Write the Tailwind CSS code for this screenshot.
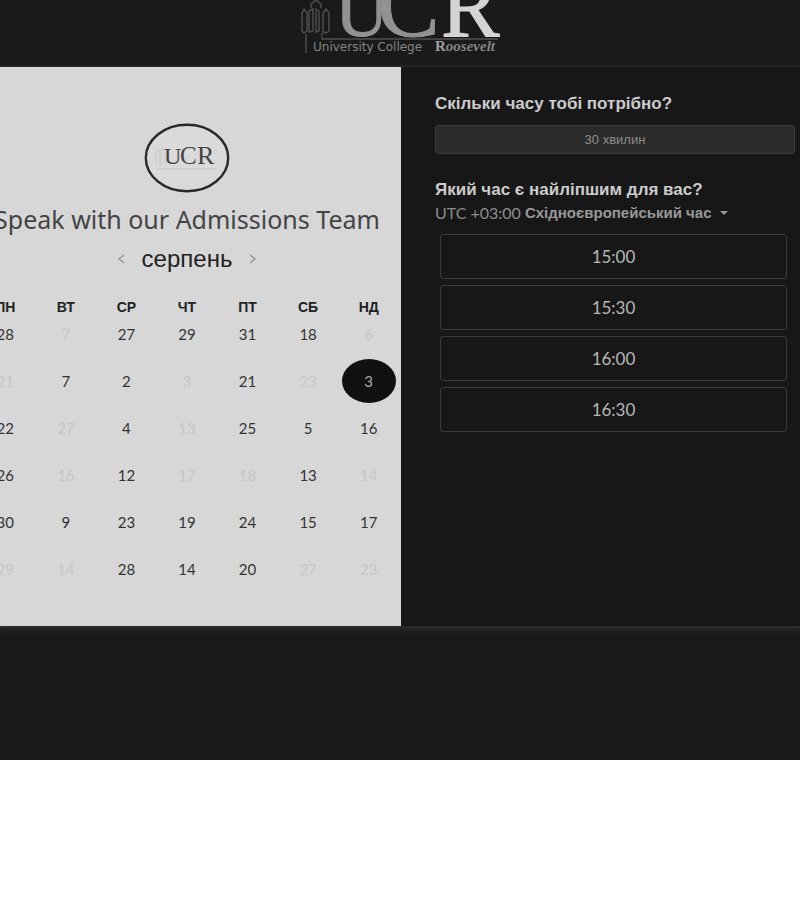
<!DOCTYPE html>
<html lang="uk">
<head>
<meta charset="utf-8">
<meta name="viewport" content="width=device-width, initial-scale=1">
<title>University College Roosevelt</title>
<script src="https://cdn.jsdelivr.net/npm/@tailwindcss/browser@4"></script>
</head>
<body class="bg-white font-['Lato','Liberation_Sans',sans-serif]">
<div class="overflow-hidden bg-[#1a1a1a] pb-[132px]">
  <header class="flex justify-center border-b-2 border-[#262626]">
    <svg class="block h-[65px] w-[208px]" viewBox="0 0 208 65" role="img" aria-label="University College Roosevelt">
      <g fill="none" stroke="#505050" stroke-width="1.4">
        <path d="M10 53V34M8 33l-2-2V13l2-4 3 4v18l-3 2M13 32V11l4-2v22zM20 32V9l3 2v20zM15 8V4l5-4 5 4v4M27 32V13l3-4 3 4v18l-3 2zM26 33v6h176"/>
      </g>
      <g font-family="Liberation Serif, serif">
        <text x="39" y="36" font-size="74" fill="#929292" stroke="#929292">U</text>
        <text x="81" y="36" font-size="94" fill="#929292" stroke="#929292">C</text>
        <text x="145" y="36" font-size="88" fill="#d4d4d4" stroke="#d4d4d4">R</text>
        <text x="139" y="51" font-size="15" font-weight="700" fill="#a0a0a0">R<tspan font-style="italic" fill="#858585">oosevelt</tspan></text>
      </g>
      <text x="17" y="51" font-size="12" font-family="DejaVu Sans, sans-serif" fill="#858585">University College</text>
    </svg>
  </header>

  <main class="grid grid-cols-[401fr_399fr] border-b-2 border-[#2b2b2b] bg-[#171717] shadow-[0_3px_6px_#262626]">
    <section class="overflow-hidden bg-[#d7d7d7] pb-5 text-[#333]">
      <div class="-ml-[25px] pr-[2px]">
        <div class="flex justify-center pt-[56px]">
          <svg class="block h-[70px] w-[86px]" viewBox="0 0 86 70" role="img" aria-label="UCR">
            <ellipse cx="43" cy="35" rx="41.2" ry="33.2" fill="#dadada" stroke="#292929" stroke-width="2.4"/>
            <path d="M12 42V30l2-3 2 3v12M17 42V28l2-3 2 3v14M12 46h61" fill="none" stroke="#c8c8c8"/>
            <g font-family="Liberation Serif, serif" fill="#444">
              <text x="20" y="41" font-size="24">U</text><text x="36" y="41" font-size="25">C</text><text x="53" y="41" font-size="26">R</text>
            </g>
          </svg>
        </div>
        <h1 class="mt-[10px] flex justify-center font-['Noto_Sans',sans-serif] text-[25px] leading-8 whitespace-nowrap text-[#444]">Speak with our Admissions Team</h1>
        <div class="mt-2 flex items-center justify-center gap-3">
          <button type="button" aria-label="Попередній місяць" class="p-1"><svg class="h-2.5 w-2.5" viewBox="0 0 10 10" fill="none" stroke="#999" stroke-width="1.6"><path d="M8 1L3 5l5 4"/></svg></button>
          <h2 class="font-['Liberation_Sans',sans-serif] text-[24px] leading-8 text-[#222]">серпень</h2>
          <button type="button" aria-label="Наступний місяць" class="p-1"><svg class="h-2.5 w-2.5" viewBox="0 0 10 10" fill="none" stroke="#999" stroke-width="1.6"><path d="M2 1l5 4-5 4"/></svg></button>
        </div>
        <table class="mt-[22px] w-full table-fixed text-center align-top text-[15px] leading-5">
          <thead class="font-['Liberation_Sans',sans-serif] text-[14px] text-[#222]">
            <tr class="h-[27px] align-top"><th>ПН</th><th>ВТ</th><th>СР</th><th>ЧТ</th><th>ПТ</th><th>СБ</th><th>НД</th></tr>
          </thead>
          <tbody>
            <tr class="h-[47px] align-top"><td>28</td><td class="text-[#c6c6c6]">7</td><td>27</td><td>29</td><td>31</td><td>18</td><td class="text-[#c6c6c6]">6</td></tr>
            <tr class="h-[47px] align-top"><td class="text-[#c6c6c6]">21</td><td>7</td><td>2</td><td class="text-[#c6c6c6]">3</td><td>21</td><td class="text-[#c6c6c6]">23</td><td><button type="button" class="-my-3 mx-auto block h-11 w-[54px] rounded-[50%] bg-[#111] text-[#aaa]">3</button></td></tr>
            <tr class="h-[47px] align-top"><td>22</td><td class="text-[#c6c6c6]">27</td><td>4</td><td class="text-[#c6c6c6]">13</td><td>25</td><td>5</td><td>16</td></tr>
            <tr class="h-[47px] align-top"><td>26</td><td class="text-[#c6c6c6]">16</td><td>12</td><td class="text-[#c6c6c6]">17</td><td class="text-[#c6c6c6]">18</td><td>13</td><td class="text-[#c6c6c6]">14</td></tr>
            <tr class="h-[47px] align-top"><td>30</td><td>9</td><td>23</td><td>19</td><td>24</td><td>15</td><td>17</td></tr>
            <tr class="h-[47px] align-top"><td class="text-[#c6c6c6]">29</td><td class="text-[#c6c6c6]">14</td><td>28</td><td>14</td><td>20</td><td class="text-[#c6c6c6]">27</td><td class="text-[#c6c6c6]">23</td></tr>
          </tbody>
        </table>
      </div>
    </section>

    <section class="pt-[27px] pr-[5px] pl-[34px]">
      <h2 class="font-['Liberation_Sans',sans-serif] text-[17px] leading-5 font-bold text-[#ccc]">Скільки часу тобі потрібно?</h2>
      <button type="button" class="mt-[11px] block h-[29px] w-full rounded-[3px] border border-[#3a3a3a] bg-[#2b2b2b] font-['Liberation_Sans',sans-serif] text-[13px] text-[#8c8c8c]">30 хвилин</button>
      <h2 class="mt-[26px] font-['Liberation_Sans',sans-serif] text-[17px] leading-5 font-bold text-[#ccc]">Який час є найліпшим для вас?</h2>
      <button type="button" class="mt-[3px] flex items-center gap-1 text-[16px] leading-5 whitespace-nowrap text-[#8c8c8c]">
        <span>UTC +03:00</span>
        <span class="font-['Liberation_Sans',sans-serif] text-[15px] font-bold text-[#999]">Східноєвропейський час</span>
        <svg class="ml-1 h-1 w-2" viewBox="0 0 8 4" fill="#999"><path d="M0 0h8L4 4z"/></svg>
      </button>
      <div class="mt-[11px] flex flex-col gap-[6px] pr-2 pl-[5px] text-[17px] text-[#b8b8b8]">
        <button type="button" class="h-[45px] rounded-[3px] border border-[#3a3a3a]">15:00</button>
        <button type="button" class="h-[45px] rounded-[3px] border border-[#3a3a3a]">15:30</button>
        <button type="button" class="h-[45px] rounded-[3px] border border-[#3a3a3a]">16:00</button>
        <button type="button" class="h-[45px] rounded-[3px] border border-[#3a3a3a]">16:30</button>
      </div>
    </section>
  </main>
</div>
</body>
</html>
